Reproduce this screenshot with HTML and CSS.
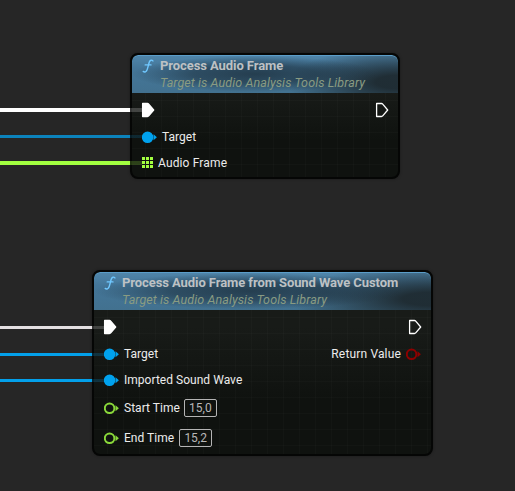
FILE: index.html
```
<!DOCTYPE html>
<html lang="en">
<head>
<meta charset="utf-8">
<title>Blueprint graph</title>
<link rel="stylesheet" href="styles.css">
</head>
<body>
<svg class="defs" width="0" height="0" aria-hidden="true">
  <symbol id="exec" viewBox="0 0 14 16"><path d="M1.6 1.5H6.5Q7.2 1.5 7.7 2.1L12.7 8L7.7 13.9Q7.2 14.5 6.5 14.5H1.6Z" stroke-width="1.3" stroke-linejoin="round"/></symbol>
  <symbol id="pin" viewBox="0 0 16 14"><circle cx="5.6" cy="7.3" r="4.8" stroke-width="2"/><path class="tip" d="M11.5 4.3L14.9 7.3L11.5 10.3Z"/></symbol>
  <symbol id="fn" viewBox="0 0 12 16"><path d="M10.9 2.9C9.8 1.6 8 2.1 7.3 4C6.6 6.2 5.9 9.6 5.1 11.8C4.4 13.9 2.6 14.5 1.2 13.4M3.2 6.9H9" fill="none" stroke="#70c8ff" stroke-width="1.4" stroke-linecap="round"/></symbol>
</svg>
<main class="graph">
  <section class="node node-a">
    <header class="head">
      <svg class="fn"><use href="#fn"/></svg>
      <div><h2 class="title">Process Audio Frame</h2><p class="sub">Target is Audio Analysis Tools Library</p></div>
    </header>
    <div class="row exec-row"><svg class="exec full"><use href="#exec"/></svg><svg class="exec"><use href="#exec"/></svg></div>
    <div class="row"><svg class="pin object"><use href="#pin"/></svg><span class="label">Target</span></div>
    <div class="row"><svg class="array" viewBox="0 0 11 11"><path d="M0 0h3v3H0zM4 0h3v3H4zM8 0h3v3H8zM0 4h3v3H0zM4 4h3v3H4zM8 4h3v3H8zM0 8h3v3H0zM4 8h3v3H4zM8 8h3v3H8z"/></svg><span class="label frame">Audio Frame</span></div>
  </section>
  <section class="node node-b">
    <header class="head">
      <svg class="fn"><use href="#fn"/></svg>
      <div><h2 class="title">Process Audio Frame from Sound Wave Custom</h2><p class="sub">Target is Audio Analysis Tools Library</p></div>
    </header>
    <div class="row exec-row"><svg class="exec full"><use href="#exec"/></svg><svg class="exec"><use href="#exec"/></svg></div>
    <div class="row"><svg class="pin object"><use href="#pin"/></svg><span class="label">Target</span><span class="label result">Return Value</span><svg class="pin bool"><use href="#pin"/></svg></div>
    <div class="row"><svg class="pin object"><use href="#pin"/></svg><span class="label">Imported Sound Wave</span></div>
    <div class="row tall"><svg class="pin float"><use href="#pin"/></svg><span class="label">Start Time</span><span class="value">15,0</span></div>
    <div class="row tall"><svg class="pin float"><use href="#pin"/></svg><span class="label">End Time</span><span class="value end">15,2</span></div>
  </section>
  <i class="wire w1"></i><i class="wire w2"></i><i class="wire w3"></i>
  <i class="wire w4"></i><i class="wire w5"></i><i class="wire w6"></i>
</main>
</body>
</html>
```
FILE: styles.css
```
* { box-sizing: border-box; }
body { margin: 0; background: #262626; font-family: Roboto, sans-serif; }
.defs { position: absolute; }
.graph { position: relative; width: 515px; height: 491px; overflow: hidden; }
.node {
  position: absolute;
  border: 2px solid #050605;
  border-radius: 8px;
  overflow: hidden;
  box-shadow: 0 0 3px rgba(0, 0, 0, .35);
  background-color: #10130f;
  background-image:
    linear-gradient(90deg, rgba(255, 255, 255, .014) 1px, transparent 1px),
    linear-gradient(rgba(255, 255, 255, .014) 1px, transparent 1px),
    linear-gradient(#181b18 30%, #0f120f 70%);
  background-size: 16px 16px, 16px 16px, 100% 100%;
}
.node-a { left: 130px; top: 53px; width: 270px; height: 126px; background-position: 13px 0, 0 13px, 0 0; }
.node-b { left: 92px; top: 270px; width: 341px; height: 186px; background-position: 13px 0, 0 13px, 0 0; }
.head {
  display: flex;
  height: 38px;
  padding-left: 10px;
  gap: 6px;
  border-radius: 6px 6px 0 0;
  box-shadow: inset 0 1px 0 #5b9dc8;
  background:
    radial-gradient(ellipse 46% 18px at 46% 19px, rgba(27, 44, 56, .75) 0%, rgba(27, 44, 56, .55) 50%, rgba(27, 44, 56, 0) 100%),
    radial-gradient(ellipse 42% 34px at 100% 27px, rgba(24, 30, 32, .82) 20%, rgba(24, 30, 32, 0) 100%),
    linear-gradient(#5086ab, #447699 35%, #42718f);
}
.fn { width: 12px; height: 16px; margin-top: 3px; }
.title { margin: 3px 0 0; font-size: 13px; line-height: 16px; font-weight: 700; letter-spacing: -.08px; color: #bdc1c4; white-space: nowrap; }
.sub { margin: 0; font-size: 12.5px; line-height: 18px; letter-spacing: .09px; font-style: italic; color: #899b82; white-space: nowrap; }
.row { display: flex; align-items: center; height: 26px; padding: 0 9px 0 10px; color: #ececec; }
.exec-row { height: 31px; padding-top: 3px; justify-content: space-between; }
.exec { width: 14px; height: 16px; fill: none; stroke: #fff; }
.exec.full { margin-left: -1px; fill: #fff; }
.pin { width: 16px; height: 14px; flex: none; fill: none; stroke: currentColor; }
.tip { fill: currentColor; stroke: none; }
.object { color: #00a2ee; fill: currentColor; }
.float { color: #8ad83a; }
.bool { color: #8e0000; }
.array { width: 11px; height: 11px; margin-top: -1px; fill: #a2ff40; }
.label { margin-left: 4px; font-size: 12px; line-height: 16px; letter-spacing: .03px; white-space: nowrap; }
.frame { margin-left: 5px; letter-spacing: .14px; }
.result { margin-left: auto; margin-right: 5px; letter-spacing: .16px; }
.tall { height: 30px; }
.value { margin-left: 4px; width: 33px; height: 18px; border: 1px solid #b5b5b5; border-radius: 2px; font-size: 12px; line-height: 16px; text-align: center; color: #b8b8b8; }
.end { margin-left: 5px; }
.wire { position: absolute; left: 0; background: linear-gradient(90deg, var(--c) var(--edge), color-mix(in srgb, var(--c) 20%, transparent) var(--edge)); }
.w1, .w2, .w3 { width: 142px; --edge: 130px; }
.w4, .w5, .w6 { width: 104px; --edge: 92px; }
.w1 { top: 108px; height: 4px; --c: #fff; }
.w2 { top: 135px; height: 3px; --c: #0c83bc; }
.w3 { top: 161px; height: 4px; --c: #a2ff40; }
.w4 { top: 326px; height: 3px; --c: #e4e0e2; }
.w5 { top: 353px; height: 3px; --c: #03a0ea; }
.w6 { top: 379px; height: 3px; --c: #03a0ea; }
```
